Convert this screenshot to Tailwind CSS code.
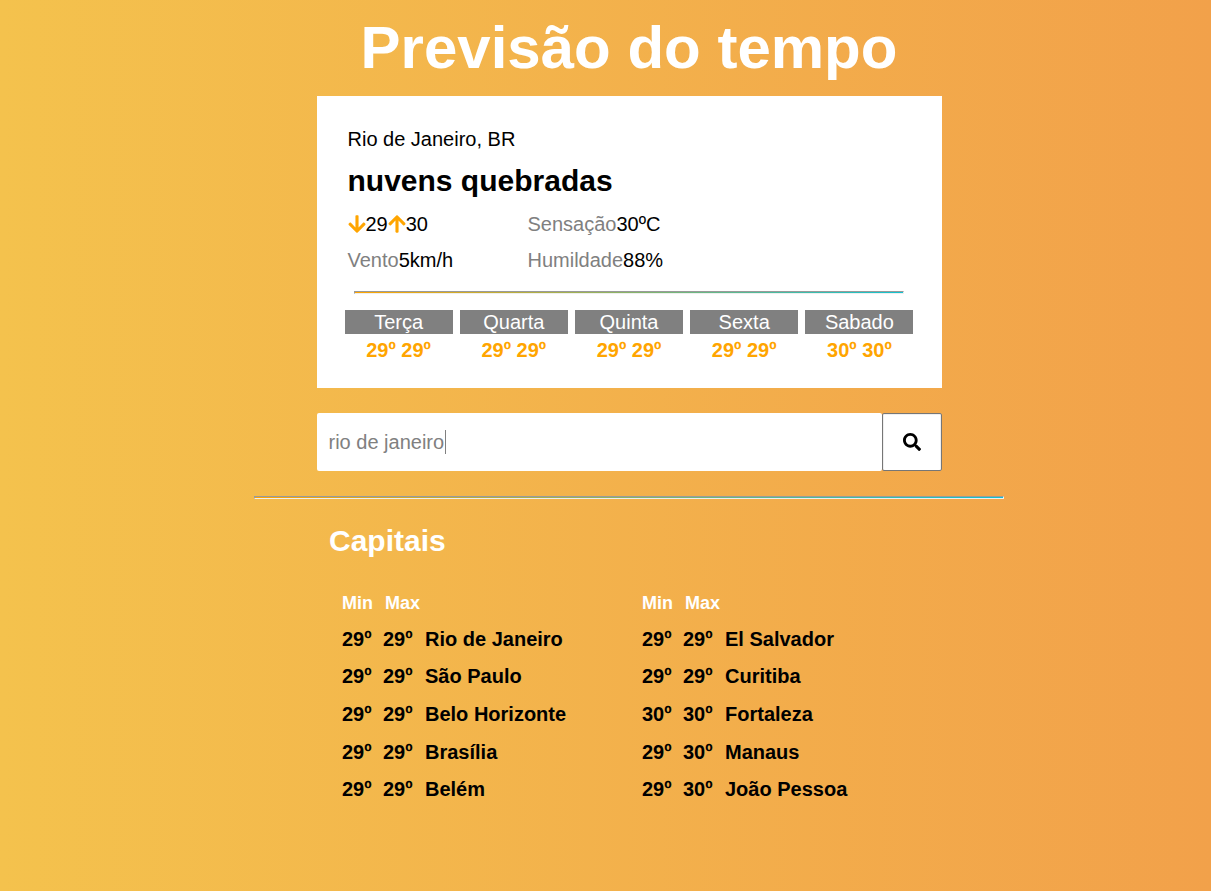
<!DOCTYPE html>
<html lang="pt-BR">
<head>
<meta charset="utf-8">
<meta name="viewport" content="width=device-width, initial-scale=1">
<title>Previsão do tempo</title>
<script src="https://cdn.jsdelivr.net/npm/@tailwindcss/browser@4"></script>
</head>
<body class="min-h-screen bg-linear-to-r/srgb from-[#f4c24d] to-[#f2a14a] font-['Liberation_Sans',Arial,sans-serif] text-xl/6 text-black">
<main class="pl-[47px] pb-20">
  <div class="mx-auto max-w-[750px]">
    <div class="mx-auto max-w-[625px]">
      <h1 class="pt-3 pb-3 text-center text-6xl/[72px] font-bold text-white">Previsão do tempo</h1>

      <section class="bg-white px-7 pt-[31px] pb-[26px]">
        <div class="px-[3px]">
          <p>Rio de Janeiro, BR</p>
          <h2 class="mt-3 text-3xl/9 font-bold">nuvens quebradas</h2>
          <div class="mt-[7px] grid grid-cols-[180px_1fr] leading-9">
            <p class="flex items-center">
              <svg class="h-5 w-[18px]" viewBox="0 0 448 512" fill="#ffa500" role="img" aria-label="Mínima"><path d="M413.1 222.5l22.2 22.2c9.4 9.4 9.4 24.6 0 33.9L241 473c-9.4 9.4-24.6 9.4-33.9 0L12.7 278.6c-9.4-9.4-9.4-24.6 0-33.9l22.2-22.2c9.5-9.5 25-9.3 34.3.4L184 343.4V56c0-13.3 10.7-24 24-24h32c13.300 0 24 10.700 24 24v287.400l114.800-120.500c9.300-9.800 24.800-10 34.300-.4z"/></svg><span>29</span>
              <svg class="h-5 w-[18px]" viewBox="0 0 448 512" fill="#ffa500" role="img" aria-label="Máxima"><path d="M34.9 289.5l-22.200-22.200c-9.400-9.400-9.400-24.600 0-33.900L207 39c9.400-9.400 24.600-9.400 33.900 0l194.300 194.300c9.400 9.400 9.400 24.600 0 33.900L413 289.400c-9.500 9.500-25 9.300-34.300-.4L264 168.600V456c0 13.300-10.700 24-24 24h-32c-13.300 0-24-10.700-24-24V168.600L69.200 289.100c-9.300 9.800-24.800 10-34.300.4z"/></svg><span>30</span>
            </p>
            <p><span class="text-[#808080]">Sensação</span>30ºC</p>
            <p><span class="text-[#808080]">Vento</span>5km/h</p>
            <p><span class="text-[#808080]">Humildade</span>88%</p>
          </div>
        </div>
        <hr class="mx-auto mt-[13px] h-[3px] max-w-[550px] border border-t-[#9a9a9a] border-r-[#eeeeee] border-b-[#eeeeee] border-l-[#9a9a9a] bg-linear-to-r/srgb from-[#ffa500] to-[#12c2d0]">
        <div class="mt-4 grid grid-cols-5 gap-[7px] text-center">
          <div><h3 class="bg-[#808080] text-white">Terça</h3><p class="mt-1 font-bold text-[#ffa500]">29º 29º</p></div>
          <div><h3 class="bg-[#808080] text-white">Quarta</h3><p class="mt-1 font-bold text-[#ffa500]">29º 29º</p></div>
          <div><h3 class="bg-[#808080] text-white">Quinta</h3><p class="mt-1 font-bold text-[#ffa500]">29º 29º</p></div>
          <div><h3 class="bg-[#808080] text-white">Sexta</h3><p class="mt-1 font-bold text-[#ffa500]">29º 29º</p></div>
          <div><h3 class="bg-[#808080] text-white">Sabado</h3><p class="mt-1 font-bold text-[#ffa500]">30º 30º</p></div>
        </div>
      </section>

      <form class="mt-[25px] flex h-[58px]">
        <div class="relative flex min-w-0 flex-1">
          <input type="text" value="rio de janeiro" aria-label="Cidade" class="min-w-0 flex-1 rounded-xs bg-white px-3 text-[#808080] caret-transparent outline-none">
          <span class="absolute top-[17px] left-32 h-6 w-px bg-[#808080]" aria-hidden="true"></span>
        </div>
        <button type="submit" aria-label="Buscar" class="flex w-[60px] items-center justify-center rounded-xs border border-[#767676] bg-white shadow-[inset_1px_0_#efefef,inset_-1px_0_#efefef,inset_0_1px_#efefef]">
          <svg class="h-[18px] w-[18px]" viewBox="0 0 512 512" fill="#000" aria-hidden="true"><path d="M505 442.7L405.3 343c-4.500-4.500-10.600-7-17-7H372c27.600-35.300 44-79.700 44-128C416 93.100 322.900 0 208 0S0 93.100 0 208s93.100 208 208 208c48.300 0 92.700-16.400 128-44v16.300c0 6.400 2.500 12.500 7 17l99.700 99.700c9.400 9.400 24.600 9.400 33.900 0l28.300-28.300c9.400-9.400 9.400-24.600.1-34zM208 336c-70.700 0-128-57.200-128-128 0-70.700 57.200-128 128-128 70.700 0 128 57.200 128 128 0 70.700-57.200 128-128 128z"/></svg>
        </button>
      </form>
    </div>

    <hr class="mt-[25px] h-[3px] border border-t-[#9a9a9a] border-r-[#eeeeee] border-b-[#eeeeee] border-l-[#9a9a9a] bg-linear-to-r/srgb from-[#ffa500] to-[#12c2d0]">

    <section class="pl-[75px]">
      <h2 class="mt-6 text-3xl/9 font-bold text-white">Capitais</h2>
      <div class="mt-8 grid grid-cols-[300px_300px] pl-[13px] font-bold">
        <table class="w-max self-start text-left">
          <thead class="text-lg/6 text-white"><tr><th class="w-[41px] pb-[5px]">Min</th><th class="pb-[5px] pl-[2px]">Max</th><td></td></tr></thead>
          <tbody class="h-[188px]">
            <tr><td class="w-[41px]">29º</td><td class="w-[42px]">29º</td><td>Rio de Janeiro</td></tr>
            <tr><td>29º</td><td>29º</td><td>São Paulo</td></tr>
            <tr><td>29º</td><td>29º</td><td>Belo Horizonte</td></tr>
            <tr><td>29º</td><td>29º</td><td>Brasília</td></tr>
            <tr><td>29º</td><td>29º</td><td>Belém</td></tr>
          </tbody>
        </table>
        <table class="w-max self-start text-left">
          <thead class="text-lg/6 text-white"><tr><th class="w-[41px] pb-[5px]">Min</th><th class="pb-[5px] pl-[2px]">Max</th><td></td></tr></thead>
          <tbody class="h-[188px]">
            <tr><td class="w-[41px]">29º</td><td class="w-[42px]">29º</td><td>El Salvador</td></tr>
            <tr><td>29º</td><td>29º</td><td>Curitiba</td></tr>
            <tr><td>30º</td><td>30º</td><td>Fortaleza</td></tr>
            <tr><td>29º</td><td>30º</td><td>Manaus</td></tr>
            <tr><td>29º</td><td>30º</td><td>João Pessoa</td></tr>
          </tbody>
        </table>
      </div>
    </section>
  </div>
</main>
</body>
</html>
